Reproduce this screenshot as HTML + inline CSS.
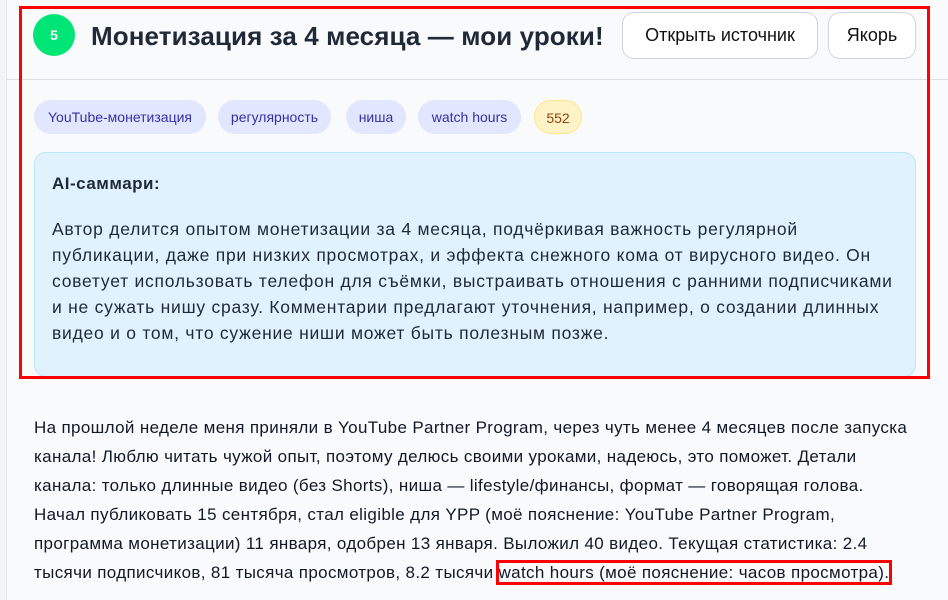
<!DOCTYPE html>
<html><head><meta charset="utf-8"><style>
*{margin:0;padding:0;box-sizing:border-box}
body{width:948px;height:587px;overflow:hidden;background:#f3f4f6;font-family:"Liberation Sans",sans-serif;color:#1f2937;position:relative}
.card{position:absolute;left:6px;top:0;width:960px;height:600px;background:#f9fafb;border-left:1px solid #e5e7eb}
.red{position:absolute;border:3px solid #ff0000}
.badge{position:absolute;left:33px;top:14px;width:42px;height:42px;border-radius:50%;background:#00e676;color:#fff;font-weight:bold;font-size:14px;text-align:center;line-height:42px}
.title{position:absolute;left:91px;top:21px;font-size:26px;font-weight:bold;color:#1f2937;white-space:nowrap;letter-spacing:0.1px}
.btn{position:absolute;top:12px;height:47px;border:1px solid #d1d5db;border-radius:12px;background:#fff;font-size:18px;line-height:45px;text-align:center;color:#111}
.hr{position:absolute;left:6px;right:0;top:79px;height:1px;background:#dcdfe3}
.tag{position:absolute;top:100px;height:34px;border-radius:17px;background:#e0e7ff;color:#3730a3;font-size:14px;line-height:34px;text-align:center;white-space:nowrap}
.sum{position:absolute;left:34px;top:152px;width:882px;height:225px;background:#e0f2fe;border:1px solid #bae6fd;border-radius:12px}
.sum h4{position:absolute;left:17px;top:21px;font-size:17px;font-weight:bold;letter-spacing:0.5px}
.sum p{position:absolute;left:17px;top:63px;font-size:17.5px;line-height:26px;color:#1f2937;white-space:nowrap;letter-spacing:0.75px}
.body{position:absolute;left:34px;top:413px;font-size:17px;line-height:29px;white-space:nowrap;color:#111827;letter-spacing:0.35px}
.hl{outline:3px solid #ff0000;outline-offset:0px}
</style></head><body>
<div class="card"></div>
<div class="badge">5</div>
<div class="title">Монетизация за 4 месяца — мои уроки!</div>
<div class="btn" style="left:622px;width:196px">Открыть источник</div>
<div class="btn" style="left:828px;width:88px">Якорь</div>
<div class="hr"></div>
<div class="tag" style="left:34px;width:172px">YouTube-монетизация</div>
<div class="tag" style="left:218px;width:113px">регулярность</div>
<div class="tag" style="left:346px;width:60px">ниша</div>
<div class="tag" style="left:418px;width:103px">watch hours</div>
<div class="tag" style="left:534px;width:48px;background:#fef3c7;border:1px solid #fde68a;color:#92400e">552</div>
<div class="sum"><h4>AI-саммари:</h4>
<p>Автор делится опытом монетизации за 4 месяца, подчёркивая важность регулярной<br>публикации, даже при низких просмотрах, и эффекта снежного кома от вирусного видео. Он<br>советует использовать телефон для съёмки, выстраивать отношения с ранними подписчиками<br>и не сужать нишу сразу. Комментарии предлагают уточнения, например, о создании длинных<br>видео и о том, что сужение ниши может быть полезным позже.</p></div>
<div class="body">На прошлой неделе меня приняли в YouTube Partner Program, через чуть менее 4 месяцев после запуска<br>канала! Люблю читать чужой опыт, поэтому делюсь своими уроками, надеюсь, это поможет. Детали<br>канала: только длинные видео (без Shorts), ниша — lifestyle/финансы, формат — говорящая голова.<br>Начал публиковать 15 сентября, стал eligible для YPP (моё пояснение: YouTube Partner Program,<br>программа монетизации) 11 января, одобрен 13 января. Выложил 40 видео. Текущая статистика: 2.4<br>тысячи подписчиков, 81 тысяча просмотров, 8.2 тысячи <span class="hl">watch hours (моё пояснение: часов просмотра).</span></div>
<div class="red" style="left:19px;top:6px;width:911px;height:373px"></div>
</body></html>
